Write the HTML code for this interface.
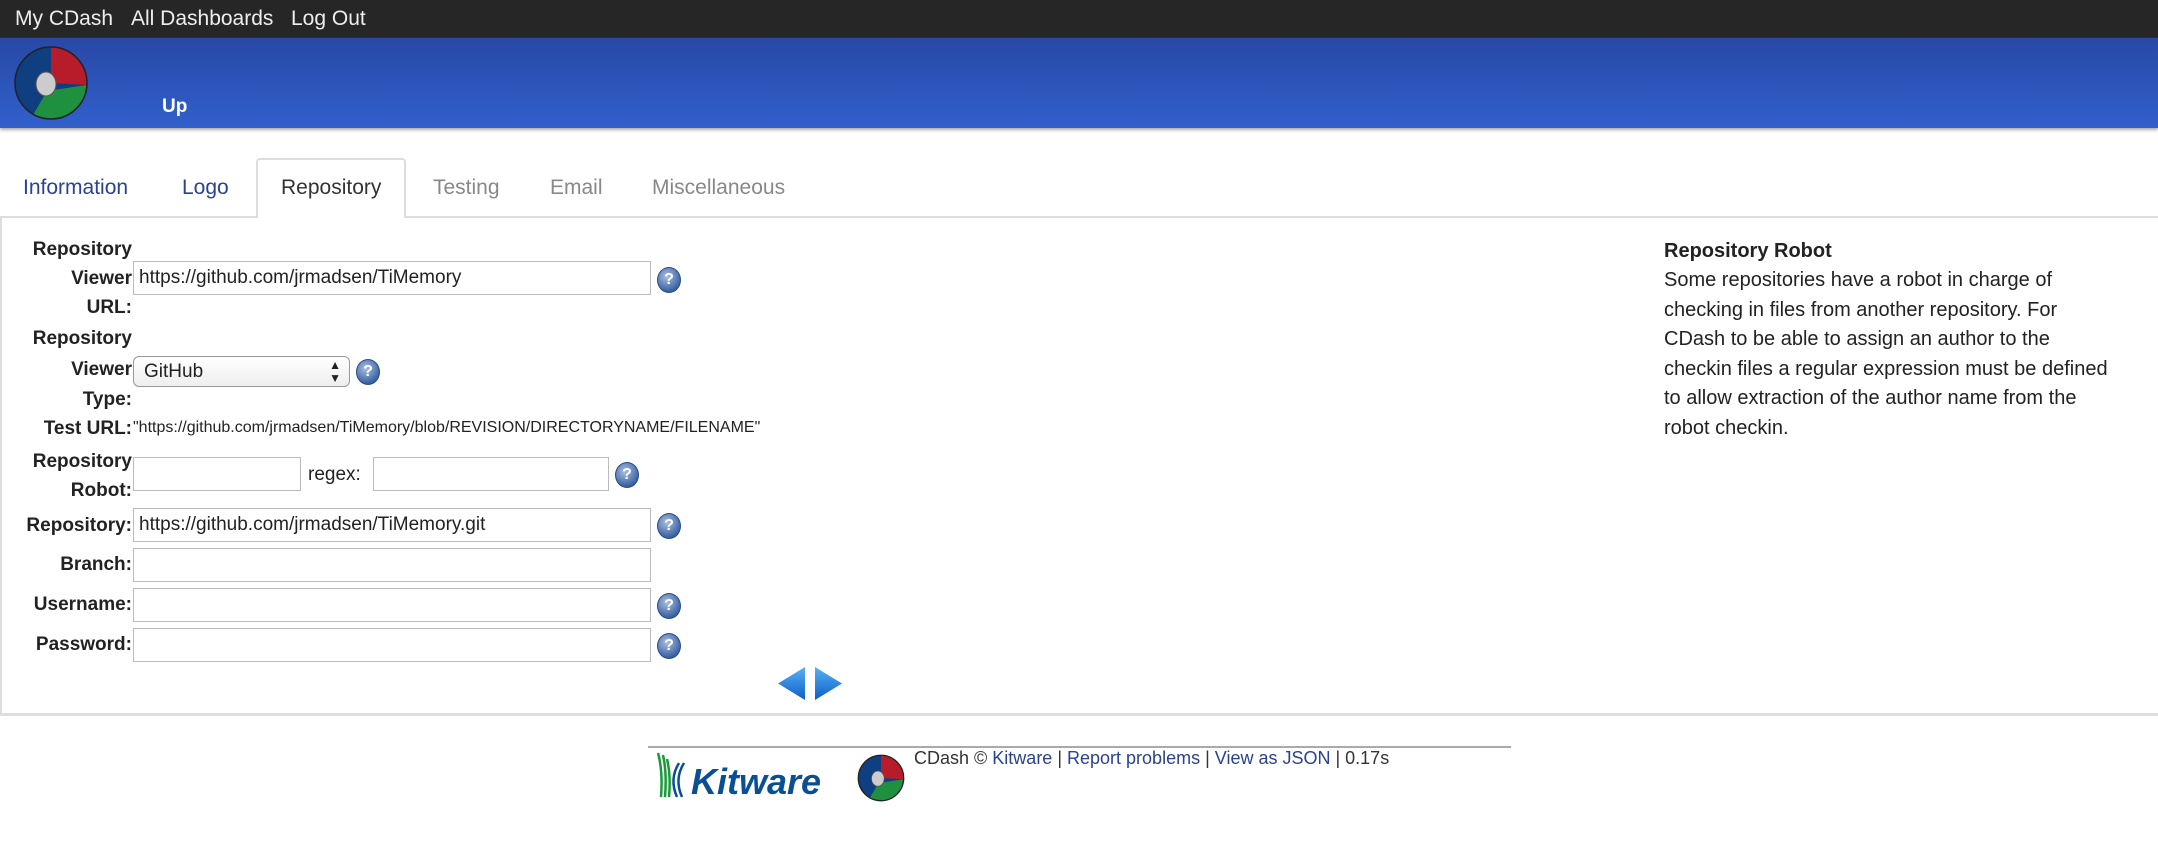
<!DOCTYPE html>
<html><head><meta charset="utf-8"><style>
*{margin:0;padding:0;box-sizing:border-box}
body{width:2158px;height:850px;position:relative;background:#fff;font-family:"Liberation Sans",Arial,sans-serif;color:#222;overflow:hidden}
.a{position:absolute;white-space:nowrap}
#top{left:0;top:0;width:2158px;height:38px;background:#262626}
#top span{position:absolute;top:7px;color:#eee;font-size:21px}
#hdr{left:0;top:38px;width:2158px;height:90px;background:linear-gradient(#2848a6,#3160cc);box-shadow:0 2px 3px #aaa}
.tab{font-size:21px;top:176px}
.lbl{font-weight:bold;font-size:19px;text-align:right;right:2026px}
.inp{border:1px solid #bbb;height:34px;font-size:19px;padding:0 5px;line-height:32px;color:#222}
.help{width:24px;height:26px;border-radius:50%;background:radial-gradient(circle at 40% 35%,#a9bfe0,#3d65a5 70%,#2a4a80);border:1px solid #2a4a80;color:#fff;font-size:16px;font-weight:bold;text-align:center;line-height:24px}
.rt{left:1664px;font-size:20px;line-height:29.5px}
a{color:#2a4290;text-decoration:none}
</style></head><body>
<div id="top" class="a"><span style="left:15px">My CDash</span><span style="left:131px">All Dashboards</span><span style="left:291px">Log Out</span></div>
<div id="hdr" class="a">
<svg style="position:absolute;left:13px;top:7px" width="76" height="76" viewBox="0 0 76 76">
<circle cx="38" cy="38" r="36" fill="#0f3f80"/>
<path d="M38 2 A36 36 0 0 1 74 40 L38 38 Z" fill="#b71c2a"/>
<path d="M74 40 A36 36 0 0 1 20 70 L34 46 Z" fill="#1f9040"/>
<circle cx="38" cy="38" r="36" fill="none" stroke="#222" stroke-width="1.5"/>
<ellipse cx="33" cy="39" rx="10" ry="12" fill="#ccc" stroke="#555"/>
</svg>
<div class="a" style="left:162px;top:58px;color:#fff;font-weight:bold;font-size:19px">Up</div>
</div>
<div class="a" style="left:0;top:216px;width:2158px;height:2px;background:#ddd"></div>
<div class="a" style="left:256px;top:158px;width:150px;height:60px;border:2px solid #ddd;border-bottom:none;border-radius:4px 4px 0 0;background:#fff"></div>
<div class="a tab" style="left:23px;color:#2a4290">Information</div>
<div class="a tab" style="left:182px;color:#2a4290">Logo</div>
<div class="a tab" style="left:281px;color:#333">Repository</div>
<div class="a tab" style="left:433px;color:#888">Testing</div>
<div class="a tab" style="left:550px;color:#888">Email</div>
<div class="a tab" style="left:652px;color:#888">Miscellaneous</div>
<div class="a" style="left:0;top:218px;width:2px;height:497px;background:#ddd"></div>
<div class="a" style="left:0;top:713px;width:2158px;height:3px;background:#ddd"></div>

<div class="a lbl" style="top:239px">Repository</div>
<div class="a lbl" style="top:268px">Viewer</div>
<div class="a lbl" style="top:297px">URL:</div>
<div class="a inp" style="left:133px;top:261px;width:518px">https://github.com/jrmadsen/TiMemory</div>
<div class="a help" style="left:657px;top:267px">?</div>

<div class="a lbl" style="top:328px">Repository</div>
<div class="a lbl" style="top:359px">Viewer</div>
<div class="a lbl" style="top:389px">Type:</div>
<div class="a inp" style="left:133px;top:356px;width:217px;height:31px;line-height:29px;border-radius:6px;border-color:#999;background:linear-gradient(#fff,#eee);padding:0 10px">GitHub<span style="position:absolute;right:8px;top:2px;font-size:12px;line-height:13px">▲<br>▼</span></div>
<div class="a help" style="left:356px;top:359px">?</div>

<div class="a lbl" style="top:418px">Test URL:</div>
<div class="a" style="left:133px;top:419px;font-size:16px">"https://github.com/jrmadsen/TiMemory/blob/REVISION/DIRECTORYNAME/FILENAME"</div>

<div class="a lbl" style="top:451px">Repository</div>
<div class="a lbl" style="top:480px">Robot:</div>
<div class="a inp" style="left:133px;top:457px;width:168px"></div>
<div class="a" style="left:308px;top:464px;font-size:19px">regex:</div>
<div class="a inp" style="left:373px;top:457px;width:236px"></div>
<div class="a help" style="left:615px;top:462px">?</div>

<div class="a lbl" style="top:515px">Repository:</div>
<div class="a inp" style="left:133px;top:508px;width:518px">https://github.com/jrmadsen/TiMemory.git</div>
<div class="a help" style="left:657px;top:513px">?</div>

<div class="a lbl" style="top:554px">Branch:</div>
<div class="a inp" style="left:133px;top:548px;width:518px"></div>

<div class="a lbl" style="top:594px">Username:</div>
<div class="a inp" style="left:133px;top:588px;width:518px"></div>
<div class="a help" style="left:657px;top:593px">?</div>

<div class="a lbl" style="top:634px">Password:</div>
<div class="a inp" style="left:133px;top:628px;width:518px"></div>
<div class="a help" style="left:657px;top:633px">?</div>

<svg class="a" style="left:777px;top:666px" width="66" height="35" viewBox="0 0 66 35">
<defs><linearGradient id="g" x1="0" y1="0" x2="0" y2="1"><stop offset="0" stop-color="#5ab0f5"/><stop offset="1" stop-color="#0b5fc8"/></linearGradient></defs>
<path d="M28 1 L28 34 L1 17.5 Z" fill="url(#g)"/>
<path d="M38 1 L38 34 L65 17.5 Z" fill="url(#g)"/>
</svg>

<div class="a rt" style="top:237px;font-weight:bold">Repository Robot</div>
<div class="a rt" style="top:266px">Some repositories have a robot in charge of<br>checking in files from another repository. For<br>CDash to be able to assign an author to the<br>checkin files a regular expression must be defined<br>to allow extraction of the author name from the<br>robot checkin.</div>

<div class="a" style="left:648px;top:746px;width:863px;height:2px;background:#aaa"></div>
<svg class="a" style="left:655px;top:751px" width="180" height="48" viewBox="0 0 180 48">
<path d="M3 2 Q8 20 6 46 M8 4 Q12 22 10 46 M12 8 Q16 25 14 46" stroke="#1a9a3a" stroke-width="2.5" fill="none"/>
<path d="M24 12 Q14 28 22 46 M29 12 Q19 28 27 46" stroke="#0a4f94" stroke-width="2.5" fill="none"/>
<text x="36" y="43" font-family="Liberation Sans" font-style="italic" font-weight="bold" font-size="36" fill="#0a4f94">Kitware</text>
</svg>
<svg class="a" style="left:857px;top:754px" width="48" height="48" viewBox="0 0 76 76">
<circle cx="38" cy="38" r="36" fill="#0f3f80"/>
<path d="M38 2 A36 36 0 0 1 74 40 L38 38 Z" fill="#b71c2a"/>
<path d="M74 40 A36 36 0 0 1 20 70 L34 46 Z" fill="#1f9040"/>
<circle cx="38" cy="38" r="36" fill="none" stroke="#222" stroke-width="2"/>
<ellipse cx="33" cy="39" rx="10" ry="12" fill="#ccc" stroke="#555"/>
</svg>
<div class="a" style="left:914px;top:748px;font-size:18px;color:#333">CDash © <a>Kitware</a> | <a>Report problems</a> | <a>View as JSON</a> | 0.17s</div>
</body></html>
